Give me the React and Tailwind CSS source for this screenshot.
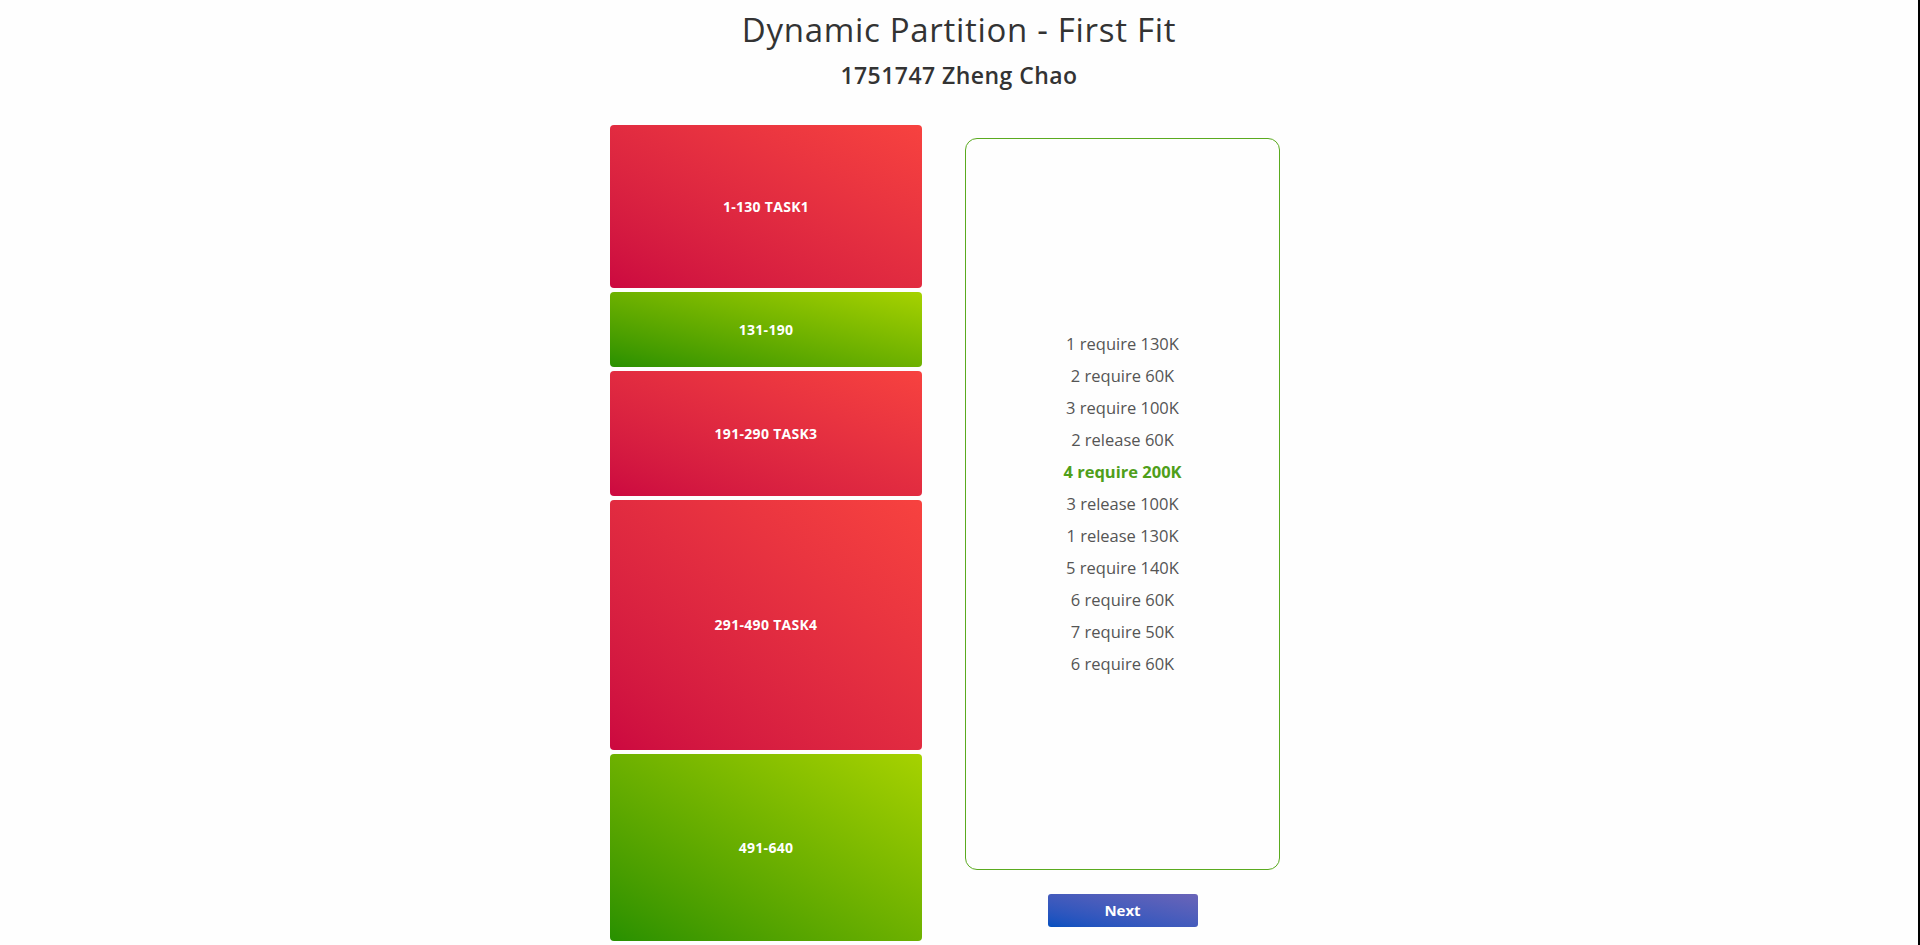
const blocks = [
  { range: '1-130', task: 'TASK1', size: 130, used: true },
  { range: '131-190', task: '', size: 60, used: false },
  { range: '191-290', task: 'TASK3', size: 100, used: true },
  { range: '291-490', task: 'TASK4', size: 200, used: true },
  { range: '491-640', task: '', size: 150, used: false },
];

const steps = [
  '1 require 130K',
  '2 require 60K',
  '3 require 100K',
  '2 release 60K',
  '4 require 200K',
  '3 release 100K',
  '1 release 130K',
  '5 require 140K',
  '6 require 60K',
  '7 require 50K',
  '6 require 60K',
];

const current = 4;

export default function App() {
  return (
    <div className="flex min-h-screen bg-[#fefefe] font-['Open_Sans',sans-serif] text-[#333]">
      <div className="flex-1">
        {/* Header */}
        <h1 className="pt-[10px] text-center text-[33px] leading-[40px] font-normal tracking-[0.7px] text-[#333]">
          Dynamic Partition - First Fit
        </h1>
        <h2 className="mt-[10px] text-center text-[23px] leading-[30px] font-semibold tracking-[0.45px] text-[#333]">
          1751747 Zheng Chao
        </h2>

        <div className="mt-[35px] flex items-start pl-[610px]">
          {/* Memory blocks */}
          <div className="flex w-[312px] flex-col gap-[4px]">
            {blocks.map((b, i) => (
              <div
                key={i}
                className={`flex items-center justify-center rounded-[4px] text-[14px] font-bold tracking-[0.3px] text-white ${
                  b.used
                    ? 'bg-gradient-to-tr from-[#cc0840] to-[#f7423f]'
                    : 'bg-gradient-to-tr from-[#279000] to-[#a6d200]'
                }`}
                style={{ height: `${b.size * 1.25}px` }}
              >
                {b.range}
                {b.task && ` ${b.task}`}
              </div>
            ))}
          </div>

          {/* Steps panel */}
          <div className="ml-[43px] mt-[13px] flex w-[315px] flex-col items-center">
            <div className="flex h-[732px] w-full flex-col items-center justify-center rounded-[12px] border border-[#5aaa1f]">
              {steps.map((s, i) => (
                <div
                  key={i}
                  className={`text-[16.5px] leading-[32px] ${
                    i === current ? 'font-bold text-[#4f9f1a]' : 'text-[#555]'
                  }`}
                >
                  {s}
                </div>
              ))}
            </div>
            <button className="mt-[24px] h-[33px] w-[150px] rounded-[3px] bg-gradient-to-tr from-[#0050c0] to-[#6a64b8] text-[15px] font-bold text-white">
              Next
            </button>
          </div>
        </div>
      </div>
      <div className="w-[2px] bg-black" />
    </div>
  );
}
